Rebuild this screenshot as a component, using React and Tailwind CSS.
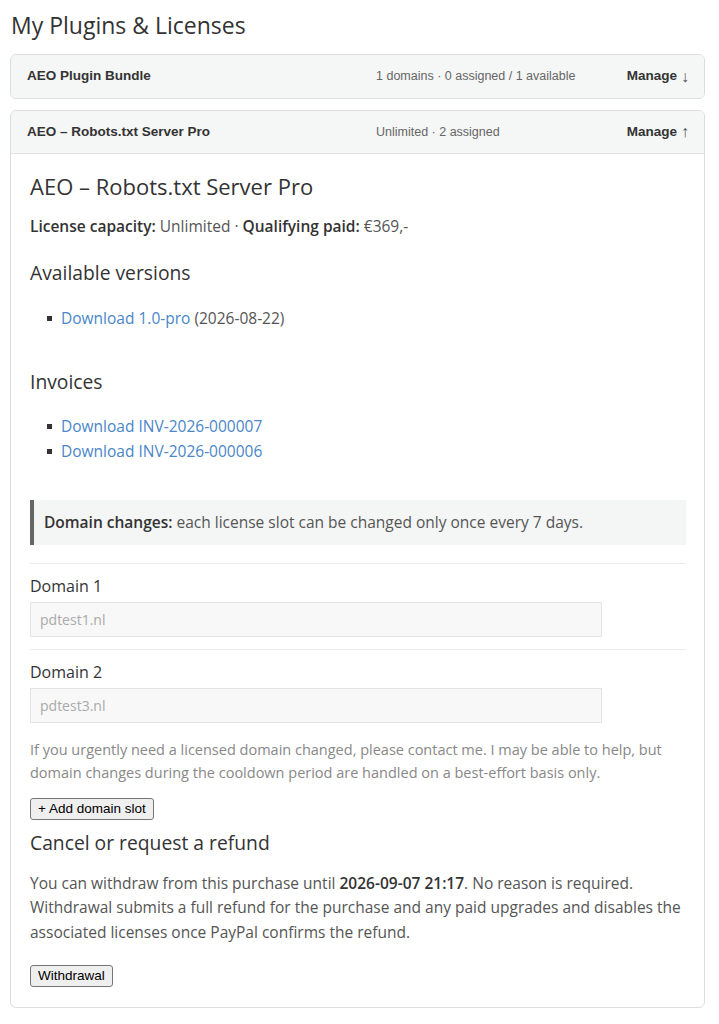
import React from "react";

const body = { fontFamily: '"Open Sans", "Noto Sans", sans-serif' };
const ui = { fontFamily: '"Liberation Sans", Arial, sans-serif' };

function Header({ title, meta, arrow, open }) {
  return (
    <div
      className={`flex items-center h-[43px] pl-4 pr-[15px] bg-[#f5f6f6] ${open ? "border-b border-[#e2e3e3]" : ""}`}
      style={ui}
    >
      <div className="w-[349px] text-[13.5px] font-bold text-[#333]">{title}</div>
      <div className="flex-1 text-[12.5px] text-[#666]">{meta}</div>
      <div className="flex items-center text-[13.5px] font-bold text-[#333]">
        Manage
        <span className="ml-[4px] text-[16px] leading-none font-normal text-[#555]">{arrow}</span>
      </div>
    </div>
  );
}

function DomainField({ label, value }) {
  return (
    <div className="border-t border-[#ececec] pt-[11px] pb-3">
      <div className="text-[16px] leading-[22px] text-[#333] mb-[5px]">{label}</div>
      <div className="w-[572px] h-[35px] border border-[#e4e4e4] bg-[#f8f8f8] flex items-center px-[9px] text-[14px] text-[#aaa]">
        {value}
      </div>
    </div>
  );
}

function Bullet({ children }) {
  return (
    <li className="flex items-center">
      <span className="w-[5px] h-[5px] bg-[#333] ml-[17px] mr-[9px]" />
      <span>{children}</span>
    </li>
  );
}

export default function App() {
  return (
    <div className="bg-white min-h-[1024px] pl-[10px] pr-[14px] pt-[9px] pb-5 text-[#333]" style={body}>
      <h1 className="text-[23px] leading-[32px] font-normal text-[#333] pl-px mb-[13px]">
        My Plugins &amp; Licenses
      </h1>

      <div className="border border-[#dcdddd] rounded-[6px] overflow-hidden mb-[11px]">
        <Header
          title="AEO Plugin Bundle"
          meta="1 domains · 0 assigned / 1 available"
          arrow="↓"
        />
      </div>

      <div className="border border-[#dcdddd] rounded-[6px] overflow-hidden">
        <Header title="AEO – Robots.txt Server Pro" meta="Unlimited · 2 assigned" arrow="↑" open />

        <div className="pl-[19px] pr-[18px] pt-[18px] pb-[20px]">
          <h2 className="text-[22px] leading-[28px] font-normal mb-[14px]">AEO – Robots.txt Server Pro</h2>
          <p className="text-[15.5px] leading-[24px] text-[#555] mb-[22px]">
            <span className="font-semibold text-[#333]">License capacity:</span> Unlimited ·{" "}
            <span className="font-semibold text-[#333]">Qualifying paid:</span> €369,-
          </p>

          <h3 className="text-[19.3px] leading-[26px] font-normal mb-[20px]">Available versions</h3>
          <ul className="text-[15.5px] leading-[25px] text-[#555] mb-[38px]">
            <Bullet>
              <span className="text-[#4a86c8]">Download 1.0-pro</span> (2026-08-22)
            </Bullet>
          </ul>

          <h3 className="text-[19.3px] leading-[26px] font-normal mb-[19px]">Invoices</h3>
          <ul className="text-[15.5px] leading-[25px] text-[#4a86c8] mb-[36px]">
            <Bullet>Download INV-2026-000007</Bullet>
            <Bullet>Download INV-2026-000006</Bullet>
          </ul>

          <div className="border-l-4 border-[#666] bg-[#f4f5f5] h-[45px] flex items-center pl-[10px] text-[15.5px] text-[#555] mb-[18px]">
            <span className="font-semibold text-[#333] mr-1">Domain changes:</span>
            each license slot can be changed only once every 7 days.
          </div>

          <DomainField label="Domain 1" value="pdtest1.nl" />
          <DomainField label="Domain 2" value="pdtest3.nl" />

          <p className="text-[14.5px] leading-[23px] text-[#888] mt-[3px] mb-[11px]">
            If you urgently need a licensed domain changed, please contact me. I may be able to help, but
            domain changes during the cooldown period are handled on a best-effort basis only.
          </p>

          <button
            className="h-[22px] px-[7px] text-[13.5px] text-black bg-[#efefef] border border-[#767676] rounded-[3px] leading-none"
            style={ui}
          >
            + Add domain slot
          </button>

          <h3 className="text-[19.3px] leading-[26px] font-normal mt-[10px] mb-[15px]">Cancel or request a refund</h3>
          <p className="text-[15.5px] leading-[24.5px] text-[#555] mb-[18px]">
            You can withdraw from this purchase until{" "}
            <span className="font-semibold text-[#333]">2026-09-07 21:17</span>. No reason is required.
            Withdrawal submits a full refund for the purchase and any paid upgrades and disables the
            associated licenses once PayPal confirms the refund.
          </p>

          <button
            className="h-[22px] px-[7px] text-[13.5px] text-black bg-[#efefef] border border-[#767676] rounded-[3px] leading-none"
            style={ui}
          >
            Withdrawal
          </button>
        </div>
      </div>
    </div>
  );
}
